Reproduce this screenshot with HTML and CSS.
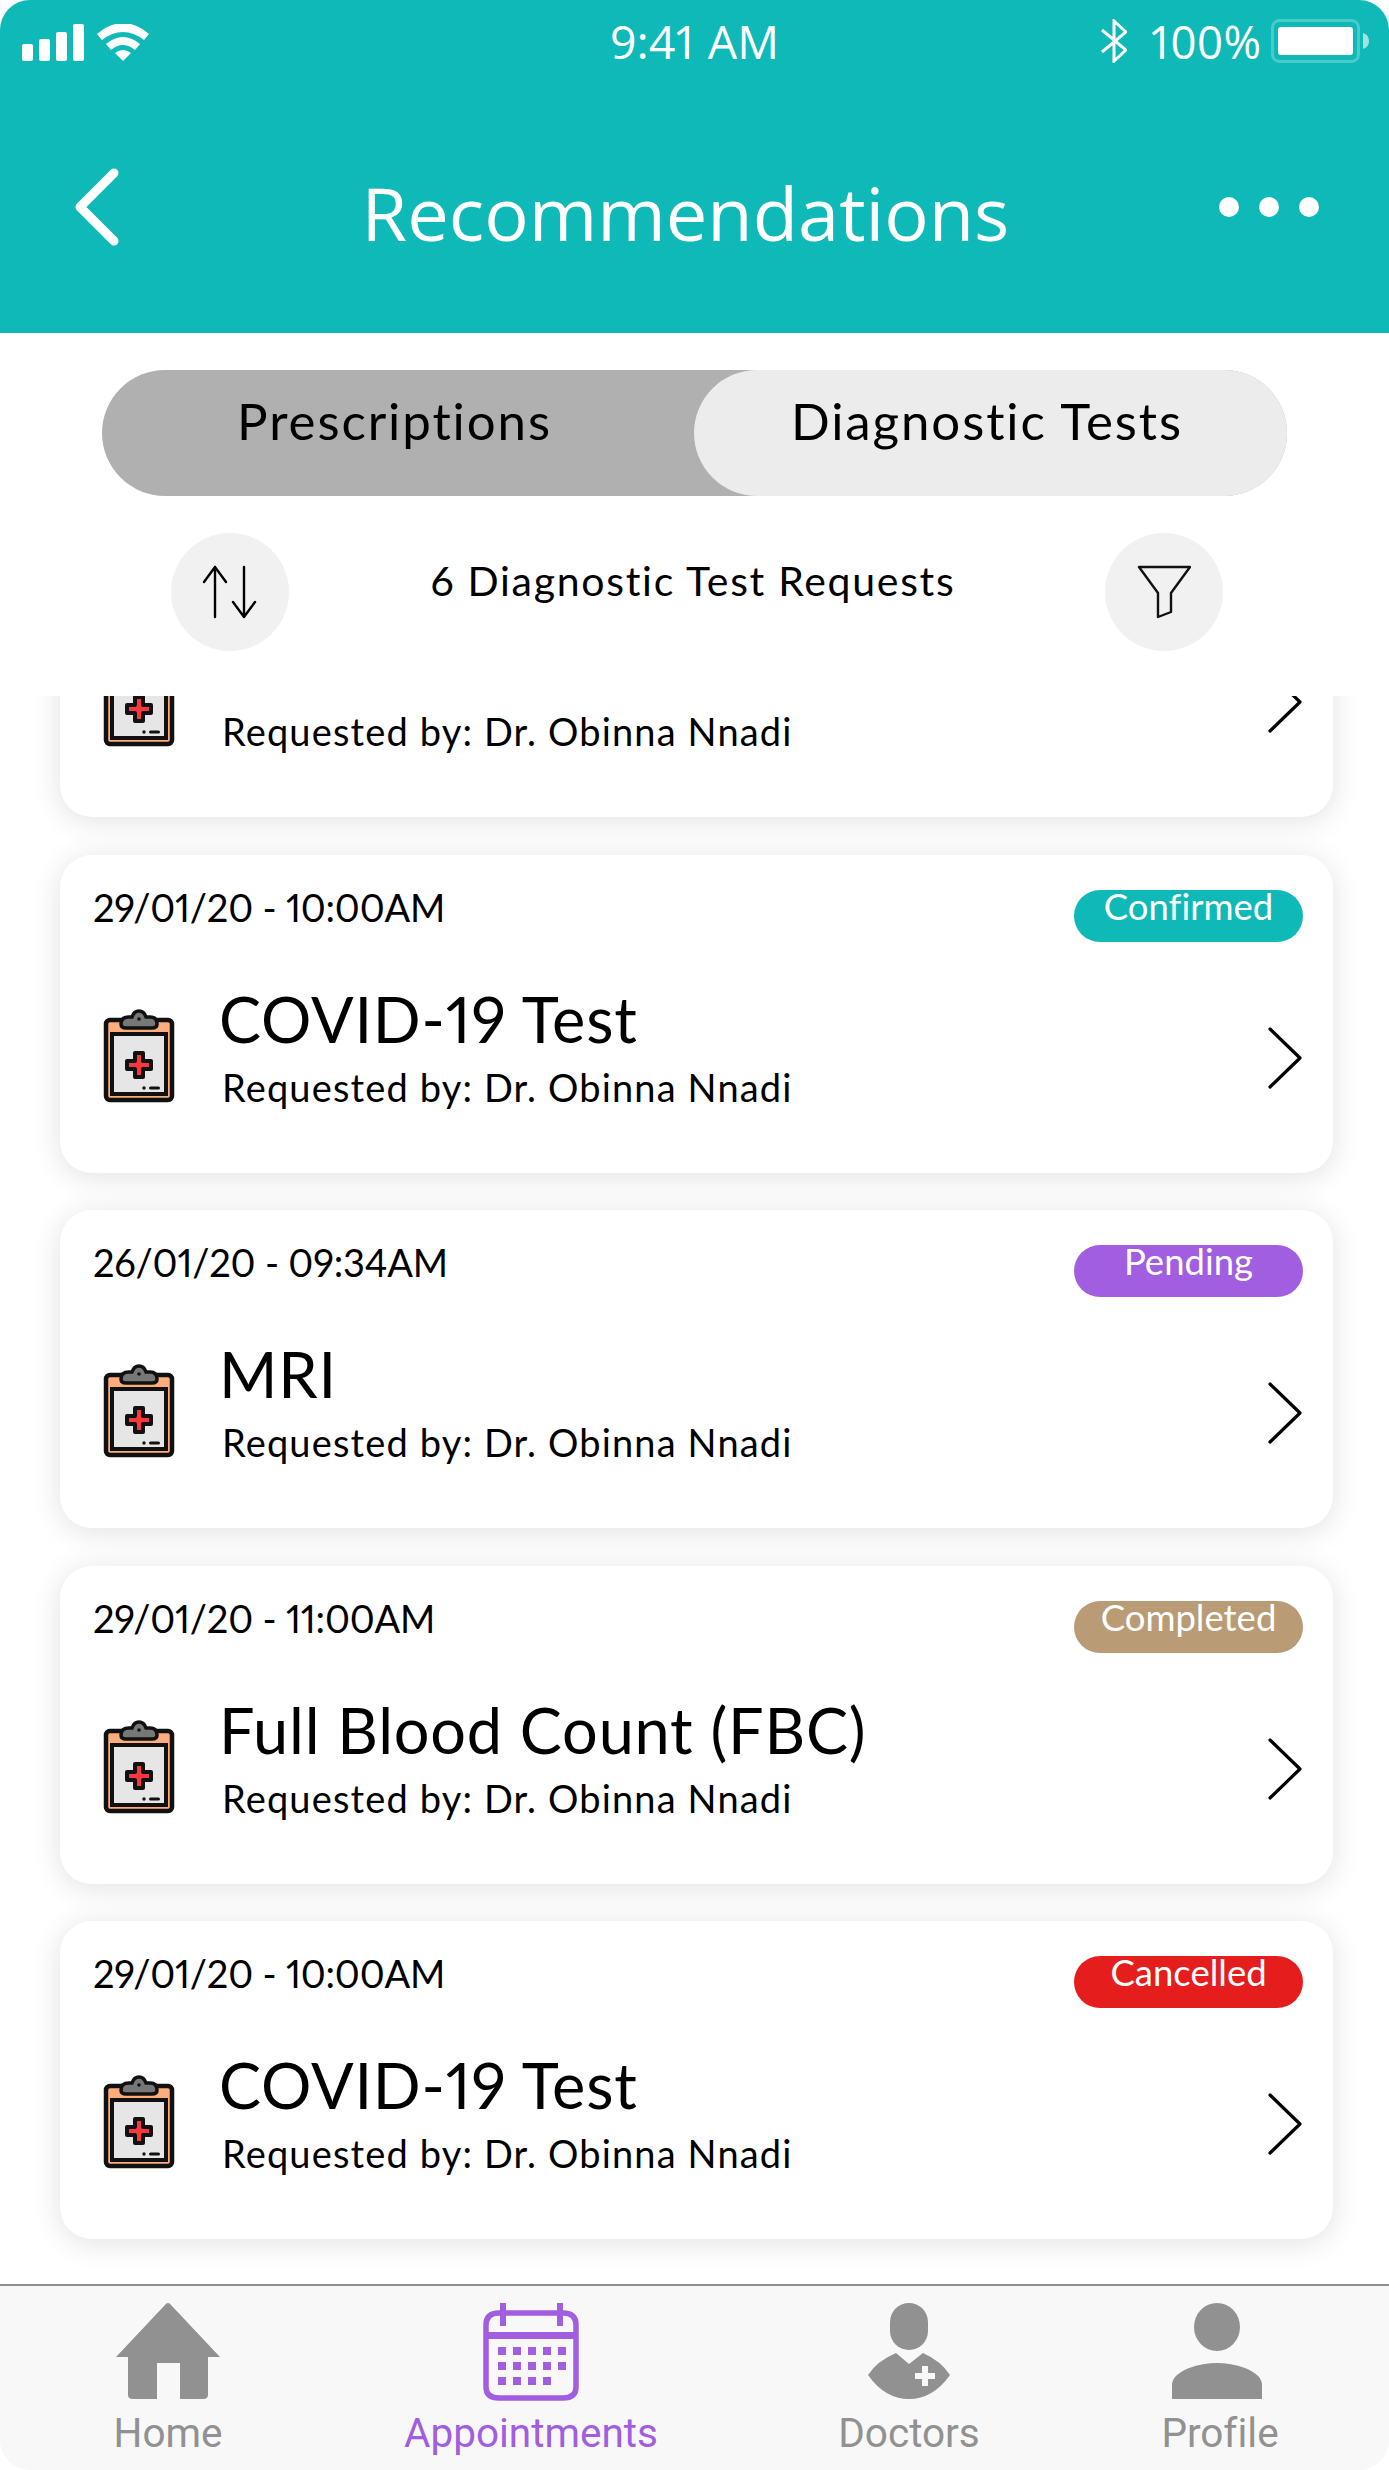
FILE: index.html
```html
<!DOCTYPE html>
<html lang="en">
<head>
    <meta charset="UTF-8">
    <title>Recommendations</title>
    <link rel="stylesheet" href="styles.css">
</head>
<body>
<div class="phone">
    <header class="topbar">
        <div class="status">
            <div class="status-left">
                <svg width="128" height="37" viewBox="0 0 128 37" fill="#fff">
                    <rect x="0" y="20" width="11" height="17" rx="2"/>
                    <rect x="17" y="15" width="11" height="22" rx="2"/>
                    <rect x="34" y="8" width="11" height="29" rx="2"/>
                    <rect x="51" y="0" width="11" height="37" rx="2"/>
                    <path d="M75 10 Q101 -12 127 10 L122 16 Q101 0 80 16Z"/>
                    <path d="M84 20 Q101 6 118 20 L113 26 Q101 16 89 26Z"/>
                    <path d="M93 29 Q101 23 109 29 L101 37Z"/>
                </svg>
            </div>
            <div class="status-time">9:41 AM</div>
            <div class="status-right">
                <svg width="26" height="44" viewBox="0 0 26 44" fill="none" stroke="#fff" stroke-width="3">
                    <path d="M1 11 L25 31 L13 42 L13 2 L25 13 L1 33"/>
                </svg>
                <span>100%</span>
                <svg width="98" height="44" viewBox="0 0 98 44">
                    <rect x="1.5" y="1.5" width="86" height="41" rx="7" fill="none" stroke="#fff" stroke-opacity=".25" stroke-width="3"/>
                    <rect x="7" y="8" width="75" height="28" rx="3" fill="#fff"/>
                    <path d="M92 14 Q98 16 98 22 Q98 28 92 30Z" fill="#fff" fill-opacity=".6"/>
                </svg>
            </div>
        </div>
        <div class="navrow">
            <svg class="back" width="46" height="78" viewBox="0 0 46 78" fill="none" stroke="#fff" stroke-width="9" stroke-linecap="round" stroke-linejoin="round">
                <path d="M40 5 L6 39 L40 73"/>
            </svg>
            <h1>Recommendations</h1>
            <div class="dots"><i></i><i></i><i></i></div>
        </div>
    </header>

    <div class="tabs">
        <div class="tab tab-off">Prescriptions</div>
        <div class="tab tab-on">Diagnostic Tests</div>
    </div>

    <div class="toolbar">
        <div class="round-btn">
            <svg width="56" height="54" viewBox="0 0 56 54" fill="none" stroke="#000" stroke-width="2.4" stroke-linecap="round" stroke-linejoin="round">
                <path d="M13 52 V2 M2 17 L13 2 L24 17"/>
                <path d="M42 2 V52 M31 37 L42 52 L53 37"/>
            </svg>
        </div>
        <div class="count">6 Diagnostic Test Requests</div>
        <div class="round-btn">
            <svg width="54" height="54" viewBox="0 0 54 54" fill="none" stroke="#111" stroke-width="2.4" stroke-linejoin="round">
                <path d="M2 2 H53 L34 28 V47 L21 52 V28 Z"/>
            </svg>
        </div>
    </div>

    <main class="list">
        <!-- scrolled up under the toolbar, only its last line still shows -->
        <article class="card card-first">
            <div class="card-top"></div>
            <div class="card-body">
                <svg class="clip" width="74" height="96"><use href="#clipboard"/></svg>
                <div class="info"><h2></h2><p>Requested by: Dr. Obinna Nnadi</p></div>
                <svg class="chev" width="36" height="62" viewBox="0 0 36 62"><use href="#chevron"/></svg>
            </div>
        </article>
        <article class="card">
            <div class="card-top"><span class="date">29/01/20 - 10:00AM</span><span class="badge badge-confirmed">Confirmed</span></div>
            <div class="card-body">
                <svg class="clip" width="74" height="96"><use href="#clipboard"/></svg>
                <div class="info"><h2>COVID-19 Test</h2><p>Requested by: Dr. Obinna Nnadi</p></div>
                <svg class="chev" width="36" height="62" viewBox="0 0 36 62"><use href="#chevron"/></svg>
            </div>
        </article>
        <article class="card">
            <div class="card-top"><span class="date">26/01/20 - 09:34AM</span><span class="badge badge-pending">Pending</span></div>
            <div class="card-body">
                <svg class="clip" width="74" height="96"><use href="#clipboard"/></svg>
                <div class="info"><h2>MRI</h2><p>Requested by: Dr. Obinna Nnadi</p></div>
                <svg class="chev" width="36" height="62" viewBox="0 0 36 62"><use href="#chevron"/></svg>
            </div>
        </article>
        <article class="card">
            <div class="card-top"><span class="date">29/01/20 - 11:00AM</span><span class="badge badge-completed">Completed</span></div>
            <div class="card-body">
                <svg class="clip" width="74" height="96"><use href="#clipboard"/></svg>
                <div class="info"><h2>Full Blood Count (FBC)</h2><p>Requested by: Dr. Obinna Nnadi</p></div>
                <svg class="chev" width="36" height="62" viewBox="0 0 36 62"><use href="#chevron"/></svg>
            </div>
        </article>
        <article class="card">
            <div class="card-top"><span class="date">29/01/20 - 10:00AM</span><span class="badge badge-cancelled">Cancelled</span></div>
            <div class="card-body">
                <svg class="clip" width="74" height="96"><use href="#clipboard"/></svg>
                <div class="info"><h2>COVID-19 Test</h2><p>Requested by: Dr. Obinna Nnadi</p></div>
                <svg class="chev" width="36" height="62" viewBox="0 0 36 62"><use href="#chevron"/></svg>
            </div>
        </article>
    </main>

    <nav class="tabbar">
        <div class="tabitem tabitem-home">
            <svg width="104" height="98" viewBox="0 0 104 98" fill="#919191">
                <path d="M52 0 Q54 0 55 2 L104 54 L92 54 L92 92 Q92 96 87 96 L64 96 L64 60 L41 60 L41 96 L17 96 Q12 96 12 92 L12 54 L0 54 L49 2 Q50 0 52 0Z"/>
            </svg>
            <span>Home</span>
        </div>
        <div class="tabitem tabitem-active">
            <svg width="96" height="98" viewBox="0 0 96 98" fill="#a15ee0">
                <path fill="none" stroke="#a15ee0" stroke-width="5.5" d="M16 10 H80 Q93 10 93 22 V84 Q93 95 80 95 H16 Q3 95 3 84 V22 Q3 10 16 10Z"/>
                <rect x="3" y="29" width="90" height="7"/>
                <rect x="17" y="0" width="6" height="23"/>
                <rect x="74" y="0" width="6" height="23"/>
                <g class="cal-dots">
                    <rect x="15" y="44" width="8" height="8"/><rect x="30" y="44" width="8" height="8"/><rect x="45" y="44" width="8" height="8"/><rect x="60" y="44" width="8" height="8"/><rect x="75" y="44" width="8" height="8"/>
                    <rect x="15" y="59" width="8" height="8"/><rect x="30" y="59" width="8" height="8"/><rect x="45" y="59" width="8" height="8"/><rect x="60" y="59" width="8" height="8"/><rect x="75" y="59" width="8" height="8"/>
                    <rect x="15" y="74" width="8" height="8"/><rect x="30" y="74" width="8" height="8"/><rect x="45" y="74" width="8" height="8"/><rect x="60" y="74" width="8" height="8"/>
                </g>
            </svg>
            <span>Appointments</span>
        </div>
        <div class="tabitem tabitem-doctors">
            <svg width="84" height="98" viewBox="0 0 84 98" fill="#919191">
                <rect x="23" y="0" width="38" height="47" rx="19"/>
                <path d="M29 50 L42 61 L56 50 Q74 58 83 72 Q66 96 42 96 Q18 96 1 72 Q10 58 29 50Z"/>
                <path d="M48 70 H55 V63 H61 V70 H68 V76 H61 V83 H55 V76 H48Z" fill="#f8f8f8"/>
            </svg>
            <span>Doctors</span>
        </div>
        <div class="tabitem tabitem-profile">
            <svg width="92" height="98" viewBox="0 0 92 98" fill="#919191">
                <ellipse cx="46" cy="24" rx="23" ry="24"/>
                <path d="M1 96 V82 Q1 72 18 65 Q32 60 46 60 Q60 60 74 65 Q91 72 91 82 V96Z"/>
            </svg>
            <span>Profile</span>
        </div>
    </nav>
</div>

<svg class="defs" width="0" height="0">
    <defs>
        <symbol id="clipboard" viewBox="0 0 74 96">
            <rect x="3" y="12" width="66" height="80" rx="4" fill="#fdac7b" stroke="#111" stroke-width="4.5"/>
            <rect x="9" y="26" width="54" height="60" fill="#e6e6e6" stroke="#111" stroke-width="4"/>
            <path d="M18 16 Q18 9 26 9 L29 9 Q31 3 36 3 Q41 3 43 9 L47 9 Q54 9 54 16 Q54 20 49 20 H23 Q18 20 18 16Z" fill="#777" stroke="#111" stroke-width="3.5"/>
            <circle cx="36" cy="11" r="1.8" fill="#111"/>
            <path d="M32 45 H40 V53 H48 V61 H40 V69 H32 V61 H24 V53 H32Z" fill="#f9373f" stroke="#111" stroke-width="4" stroke-linejoin="round"/>
            <circle cx="41" cy="80" r="1.7" fill="#111"/>
            <rect x="46" y="78.5" width="11" height="3" rx="1.5" fill="#111"/>
        </symbol>
        <symbol id="chevron" viewBox="0 0 36 62">
            <path d="M3 2 L33 31 L3 60" fill="none" stroke="#000" stroke-width="3.2" stroke-linecap="round" stroke-linejoin="round"/>
        </symbol>
    </defs>
</svg>
</body>
</html>
```

FILE: styles.css
```css
* { box-sizing: border-box; }
html, body { margin: 0; padding: 0; background: #fff; }
.defs { position: absolute; }

.phone {
    width: 1389px;
    height: 2470px;
    display: flex;
    flex-direction: column;
    overflow: hidden;
    border-radius: 30px;
    background: #fff;
    font-family: Lato, "Open Sans", sans-serif;
    font-variant-ligatures: none;
    font-variant-numeric: proportional-nums;
    color: #000;
}

/* teal header */
.topbar {
    height: 333px;
    flex: none;
    background: #0fb9b7;
    color: #fff;
    font-family: "Open Sans", "Noto Sans", sans-serif;
}
.status {
    position: relative;
    height: 84px;
    padding: 20px 20px 0 22px;
    display: flex;
    justify-content: space-between;
}
.status-left { padding-top: 4px; }
.status-time {
    font-size: 46.5px;
    line-height: 44px;
    position: absolute;
    left: 0;
    right: 0;
    top: 19px;
    text-align: center;
}
.status-right {
    display: flex;
    align-items: flex-start;
    gap: 24px;
    font-size: 45.5px;
    line-height: 44px;
    margin-top: -1px;
}
.status-right span { margin-right: -14px; }

.navrow {
    height: 120px;
    margin-top: 63px;
    padding: 0 70px 0 74px;
    display: flex;
    align-items: center;
    justify-content: space-between;
}
.navrow h1 {
    margin: 12px 0 0 32px;
    font-size: 74px;
    font-weight: 400;
    line-height: 100px;
}
.dots { display: flex; gap: 20px; }
.dots i {
    display: block;
    width: 20px;
    height: 20px;
    border-radius: 50%;
    background: #fff;
}

/* segmented control */
.tabs {
    flex: none;
    width: 1185px;
    height: 126px;
    margin: 37px 0 0 102px;
    display: flex;
    border-radius: 63px;
    background: #b0b0b0;
}
.tab {
    font-size: 51px;
    letter-spacing: 1.9px;
    line-height: 102px;
    text-align: center;
    border-radius: 63px;
    padding-right: 7px;
}
.tab-off { width: 592px; }
.tab-on { width: 593px; background: #ececec; }

.toolbar {
    flex: none;
    height: 118px;
    margin-top: 37px;
    padding: 0 166px 0 171px;
    display: flex;
    align-items: center;
    justify-content: space-between;
}
.round-btn {
    width: 118px;
    height: 118px;
    border-radius: 50%;
    background: #f1f1f1;
    display: flex;
    align-items: center;
    justify-content: center;
}
.count {
    font-size: 41px;
    letter-spacing: 1.7px;
    margin-top: -24px;
    margin-left: -8px;
}

/* scrolled list of requests */
.list {
    flex: 1;
    min-height: 0;
    margin-top: 45px;
    padding: 0 56px 0 60px;
    overflow: hidden;
}
.card {
    height: 318px;
    margin-bottom: 37.5px;
    padding: 32px 30px 0 33px;
    background: #fff;
    border-radius: 32px;
    box-shadow: 0 4px 30px rgba(0, 0, 0, 0.12);
}
.card-first { margin-top: -197px; }
.card-top {
    display: flex;
    justify-content: space-between;
    height: 70px;
}
.date { font-size: 38px; line-height: 40px; letter-spacing: -0.2px; }
.badge {
    width: 229px;
    height: 52px;
    margin-top: 3px;
    border-radius: 26px;
    color: #fff;
    font-size: 36.5px;
    line-height: 32px;
    text-align: center;
}
.badge-confirmed { background: #0fb9b7; }
.badge-pending { background: #a15ee0; }
.badge-completed { background: #b99c76; }
.badge-cancelled { background: #e61d1d; }

.card-body {
    display: flex;
    align-items: center;
    padding-top: 26px;
}
.clip { flex: none; margin: 19px 0 0 10px; }
.info { flex: 1; padding-left: 45px; }
.info h2 {
    margin: 0 0 0 -3px;
    min-height: 72px;
    font-size: 63px;
    font-weight: 400;
    letter-spacing: 0.8px;
    line-height: 72px;
}
.info p {
    margin: 9px 0 0;
    font-size: 38px;
    letter-spacing: 1.15px;
    line-height: 46px;
}
.chev { flex: none; margin-top: 23px; }

/* bottom tab bar */
.tabbar {
    flex: none;
    height: 186px;
    position: relative;
    background: #f8f8f8;
    border-top: 2px solid #8f8f8f;
    display: flex;
    color: #919191;
    font-family: Roboto, sans-serif;
    font-size: 40.5px;
}
.tabitem {
    position: absolute;
    top: 17px;
    display: flex;
    flex-direction: column;
    align-items: center;
    width: 300px;
}
.tabitem span { line-height: 54px; margin-top: 5px; }
.tabitem-home { left: 18px; }
.tabitem-active { left: 381px; color: #a15ee0; }
.tabitem-doctors { left: 759px; }
.tabitem-profile { left: 1070px; }
.tabitem-profile svg { margin-left: -7px; }
```
